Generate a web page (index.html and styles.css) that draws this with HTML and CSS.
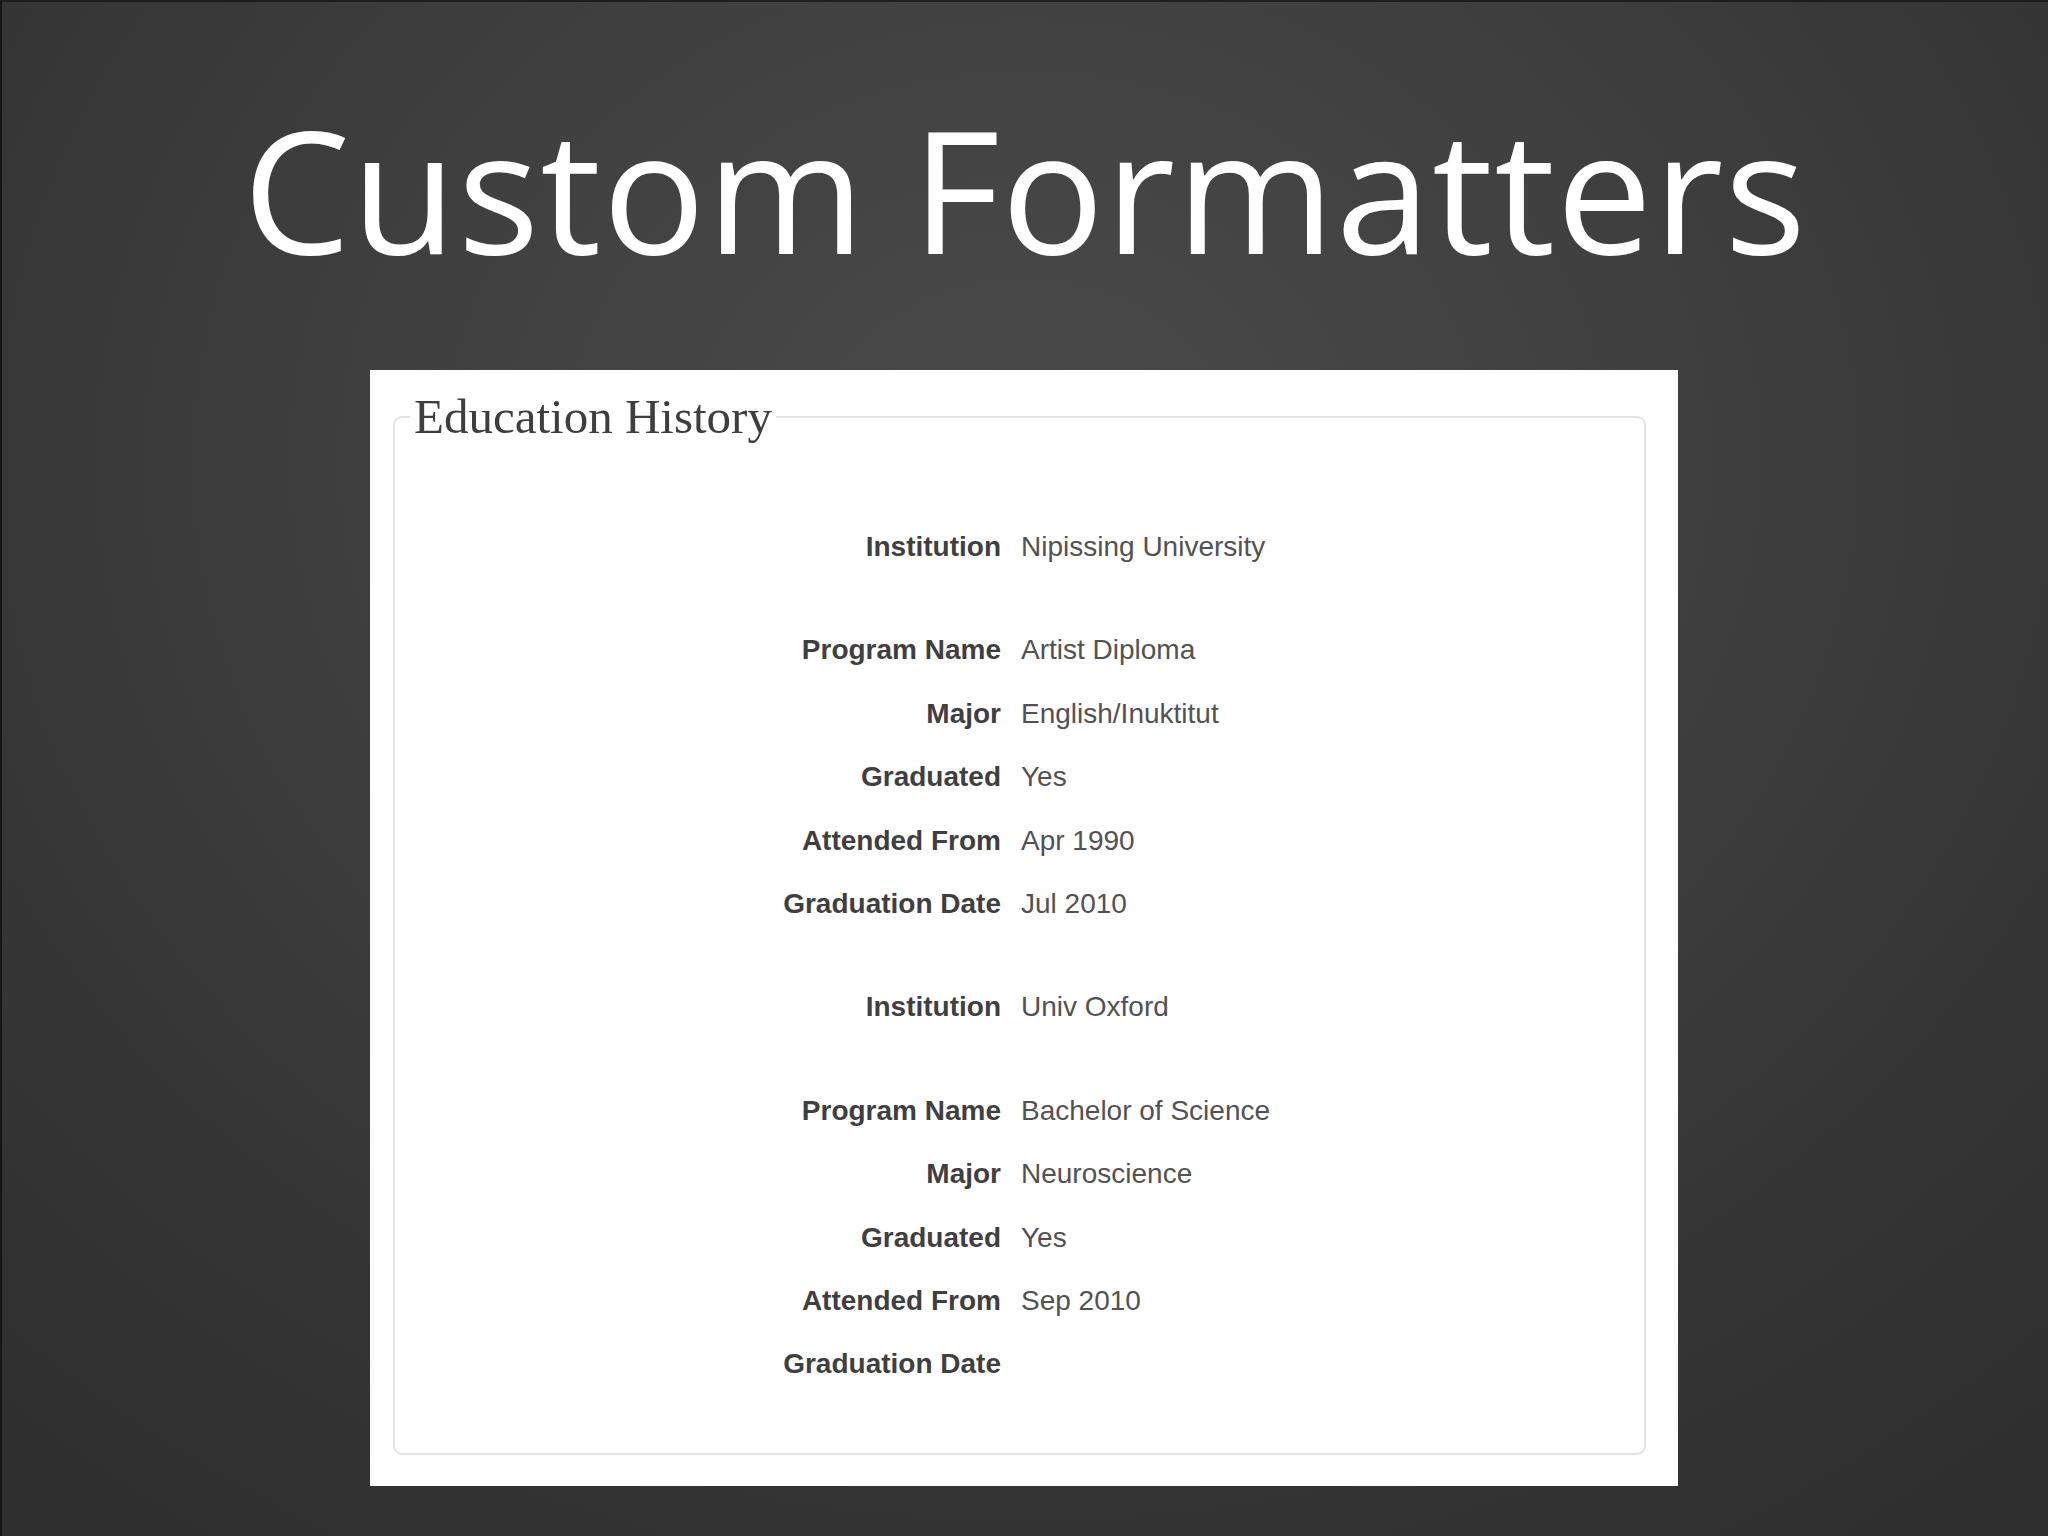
FILE: index.html
```html
<!DOCTYPE html>
<html lang="en">
<head>
<meta charset="utf-8">
<title>Custom Formatters</title>
<link rel="stylesheet" href="styles.css">
</head>
<body>
<div class="slide">
  <h1 class="title">Custom Formatters</h1>
  <div class="panel">
    <fieldset class="box">
      <legend class="legend">Education History</legend>
      <div class="groups">
        <dl class="group">
          <dt>Institution</dt><dd>Nipissing University</dd>
        </dl>
        <dl class="group">
          <dt>Program Name</dt><dd>Artist Diploma</dd>
          <dt>Major</dt><dd>English/Inuktitut</dd>
          <dt>Graduated</dt><dd>Yes</dd>
          <dt>Attended From</dt><dd>Apr 1990</dd>
          <dt>Graduation Date</dt><dd>Jul 2010</dd>
        </dl>
        <dl class="group">
          <dt>Institution</dt><dd>Univ Oxford</dd>
        </dl>
        <dl class="group">
          <dt>Program Name</dt><dd>Bachelor of Science</dd>
          <dt>Major</dt><dd>Neuroscience</dd>
          <dt>Graduated</dt><dd>Yes</dd>
          <dt>Attended From</dt><dd>Sep 2010</dd>
          <dt>Graduation Date</dt><dd></dd>
        </dl>
      </div>
    </fieldset>
  </div>
</div>
</body>
</html>
```
FILE: styles.css
```css
html, body {
  margin: 0;
  padding: 0;
}
body {
  width: 2048px;
  height: 1536px;
  overflow: hidden;
  background: #333;
}
.slide {
  box-sizing: border-box;
  width: 2048px;
  height: 1536px;
  border-left: 2px solid #161616;
  border-top: 2px solid #1e1e1e;
  background: radial-gradient(ellipse 75% 85% at 50% 30%, #4a4a4a 0%, #404040 40%, #353535 75%, #2f2f2f 100%);
  display: flex;
  flex-direction: column;
  align-items: center;
}
.title {
  margin: 100px 0 0 0;
  font-family: "Open Sans", "DejaVu Sans", sans-serif;
  font-weight: 400;
  font-size: 171px;
  line-height: 171px;
  height: 171px;
  color: #ffffff;
  letter-spacing: 1.2px;
  white-space: nowrap;
}
.panel {
  margin-top: 97px;
  margin-left: -2px;
  box-sizing: border-box;
  width: 1308px;
  height: 1116px;
  background: #ffffff;
  padding: 19px 32px 0 23px;
}
.box {
  margin: 0;
  padding: 0;
  height: 1066px;
  box-sizing: border-box;
  border: 2px solid #e3e3e3;
  border-radius: 9px;
  min-width: 0;
}
.legend {
  margin-left: 15px;
  padding: 0 4px;
  font-family: "Liberation Serif", "Times New Roman", serif;
  font-size: 49px;
  line-height: 55px;
  color: #3e3e3e;
}
.groups {
  padding-top: 71px;
  display: flex;
  flex-direction: column;
  gap: 40px;
}
.group {
  margin: 0;
  display: grid;
  grid-template-columns: 606px 1fr;
  column-gap: 20px;
  font-family: "Liberation Sans", Arial, sans-serif;
  font-size: 28px;
  line-height: 63.4px;
}
.group dt {
  margin: 0;
  text-align: right;
  font-weight: 700;
  color: #3f3f3f;
}
.group dd {
  margin: 0;
  color: #525252;
  min-height: 63.4px;
}
```
